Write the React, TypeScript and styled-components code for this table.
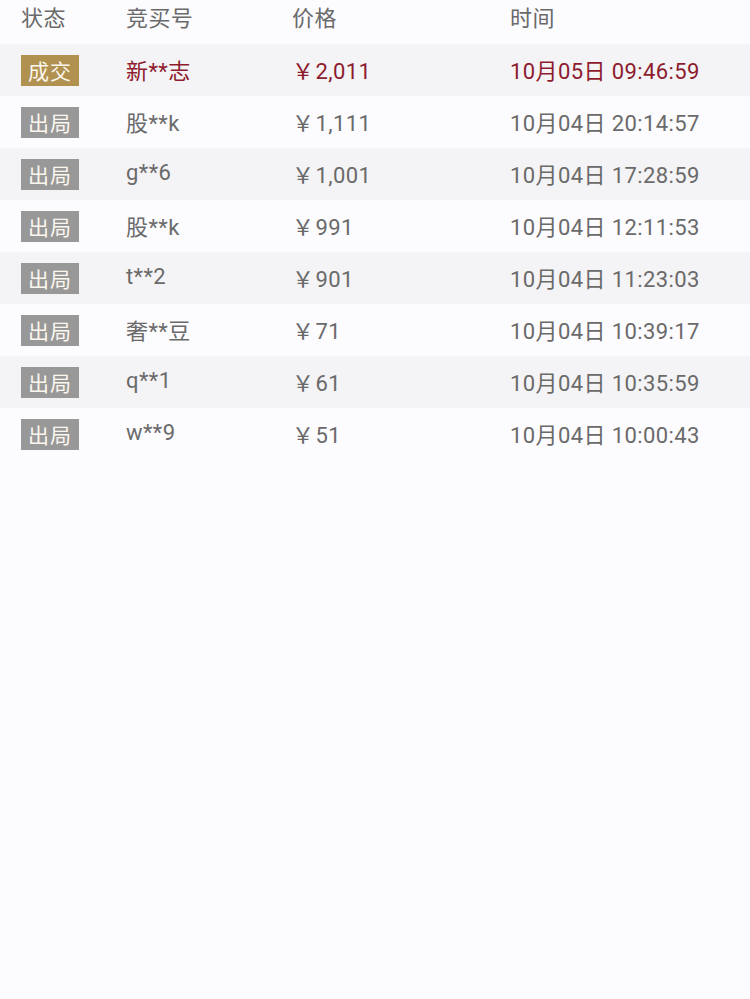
import styled, { createGlobalStyle } from "styled-components";

const Global = createGlobalStyle`
  html, body {
    margin: 0;
    padding: 0;
    background: #fcfbfe;
    font-family: Roboto, "Noto Sans CJK SC", sans-serif;
  }
`;

interface Bid {
  deal?: boolean;
  name: string;
  price: string;
  time: string;
}

const bids: Bid[] = [
  { deal: true, name: "新**志", price: "2,011", time: "10月05日 09:46:59" },
  { name: "股**k", price: "1,111", time: "10月04日 20:14:57" },
  { name: "g**6", price: "1,001", time: "10月04日 17:28:59" },
  { name: "股**k", price: "991", time: "10月04日 12:11:53" },
  { name: "t**2", price: "901", time: "10月04日 11:23:03" },
  { name: "奢**豆", price: "71", time: "10月04日 10:39:17" },
  { name: "q**1", price: "61", time: "10月04日 10:35:59" },
  { name: "w**9", price: "51", time: "10月04日 10:00:43" },
];

const Table = styled.div`
  width: 750px;
  min-height: 999px;
  background: #fcfbfe;
`;

const Row = styled.div<{ $head?: boolean; $striped?: boolean; $deal?: boolean }>`
  display: grid;
  grid-template-columns: 105px 166px 218px 1fr;
  align-items: center;
  padding-left: 21px;
  height: ${(p) => (p.$head ? "44px" : "52px")};
  background: ${(p) => (p.$striped ? "#f4f3f5" : "transparent")};
  color: ${(p) => (p.$deal ? "#8c1c2e" : "#6a6a6a")};
  font-size: 22px;
  letter-spacing: 0.4px;
  box-sizing: border-box;
  padding-bottom: ${(p) => (p.$head ? "12px" : "3px")};
`;

const Cell = styled.div`
  white-space: nowrap;
`;

const Badge = styled.span<{ $deal?: boolean }>`
  display: inline-flex;
  align-items: center;
  justify-content: center;
  width: 58px;
  height: 31px;
  margin-top: 3px;
  background: ${(p) => (p.$deal ? "#b1914f" : "#989898")};
  color: #fbf6ee;
  font-size: 21px;
  letter-spacing: 1px;
`;

const Yen = styled.span`
  margin-right: 1px;
`;

export default function App() {
  return (
    <>
      <Global />
      <Table>
        <Row $head>
          <Cell>状态</Cell>
          <Cell>竞买号</Cell>
          <Cell>价格</Cell>
          <Cell>时间</Cell>
        </Row>
        {bids.map((b, i) => (
          <Row key={i} $striped={i % 2 === 0} $deal={b.deal}>
            <Cell>
              <Badge $deal={b.deal}>{b.deal ? "成交" : "出局"}</Badge>
            </Cell>
            <Cell>{b.name}</Cell>
            <Cell>
              <Yen>￥</Yen>
              {b.price}
            </Cell>
            <Cell>{b.time}</Cell>
          </Row>
        ))}
      </Table>
    </>
  );
}
